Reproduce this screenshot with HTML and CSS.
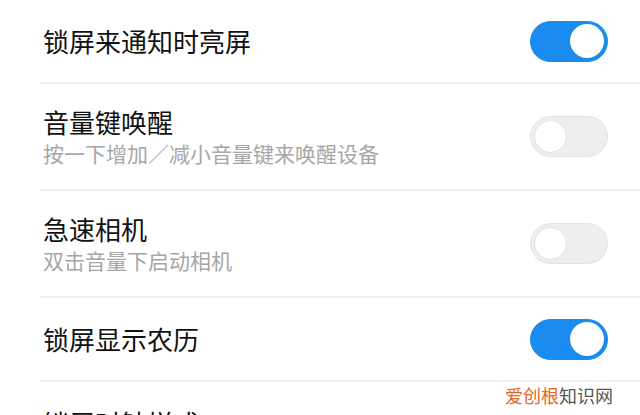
FILE: index.html
```html
<!DOCTYPE html>
<html lang="zh-CN">
<head>
    <meta charset="UTF-8">
    <meta name="viewport" content="width=device-width, initial-scale=1.0">
    <title>锁屏设置</title>
    <link rel="stylesheet" href="styles.css">
</head>
<body>
    <div class="settings">
        <div class="row">
            <div class="text">
                <div class="title">锁屏来通知时亮屏</div>
            </div>
            <div class="switch on"><span class="knob"></span></div>
        </div>

        <div class="row tall">
            <div class="text">
                <div class="title">音量键唤醒</div>
                <div class="desc">按一下增加／减小音量键来唤醒设备</div>
            </div>
            <div class="switch"><span class="knob"></span></div>
        </div>

        <div class="row tall">
            <div class="text">
                <div class="title">急速相机</div>
                <div class="desc">双击音量下启动相机</div>
            </div>
            <div class="switch"><span class="knob"></span></div>
        </div>

        <div class="row">
            <div class="text">
                <div class="title">锁屏显示农历</div>
            </div>
            <div class="switch on"><span class="knob"></span></div>
        </div>

        <div class="row last">
            <div class="text">
                <div class="title">锁屏时钟样式</div>
            </div>
        </div>
    </div>

    <div class="watermark"><span class="brand">爱创根</span>知识网</div>
</body>
</html>
```

FILE: styles.css
```css
body {
    margin: 0;
    background-color: #fff;
    font-family: "Noto Sans CJK SC", "Noto Sans", sans-serif;
    color: #111;
    overflow: hidden;
    position: relative;
    height: 415px;
}

.settings {
    margin-left: 40px;
}

.row {
    height: 84px;
    box-sizing: border-box;
    border-bottom: 2px solid #eeeeee;
    display: flex;
    align-items: center;
    justify-content: space-between;
    padding-left: 3px;
    padding-right: 32px;
}

.row.tall {
    height: 107px;
}

.row.last {
    align-items: flex-start;
    padding-top: 25px;
}

.title {
    font-size: 26px;
    line-height: 32px;
}

.desc {
    font-size: 21px;
    line-height: 28px;
    color: #a6a6a6;
    margin-top: 1px;
}

.switch {
    width: 78px;
    height: 41px;
    box-sizing: border-box;
    border-radius: 21px;
    background-color: #eeeeee;
    border: 1px solid #e4e4e4;
    display: flex;
    align-items: center;
    padding: 0 3px;
}

.knob {
    width: 33px;
    height: 33px;
    border-radius: 50%;
    background-color: #fff;
    border: 1px solid #e2e2e2;
    box-sizing: border-box;
}

.switch.on {
    background-color: #1a8cef;
    border-color: #1a8cef;
    justify-content: flex-end;
}

.switch.on .knob {
    border: none;
    width: 34px;
    height: 34px;
}

.watermark {
    position: absolute;
    right: 27px;
    top: 383px;
    font-size: 18px;
    line-height: 24px;
    color: #555;
    background-color: rgba(255, 255, 255, 0.85);
}

.brand {
    color: #e5652a;
}
```
